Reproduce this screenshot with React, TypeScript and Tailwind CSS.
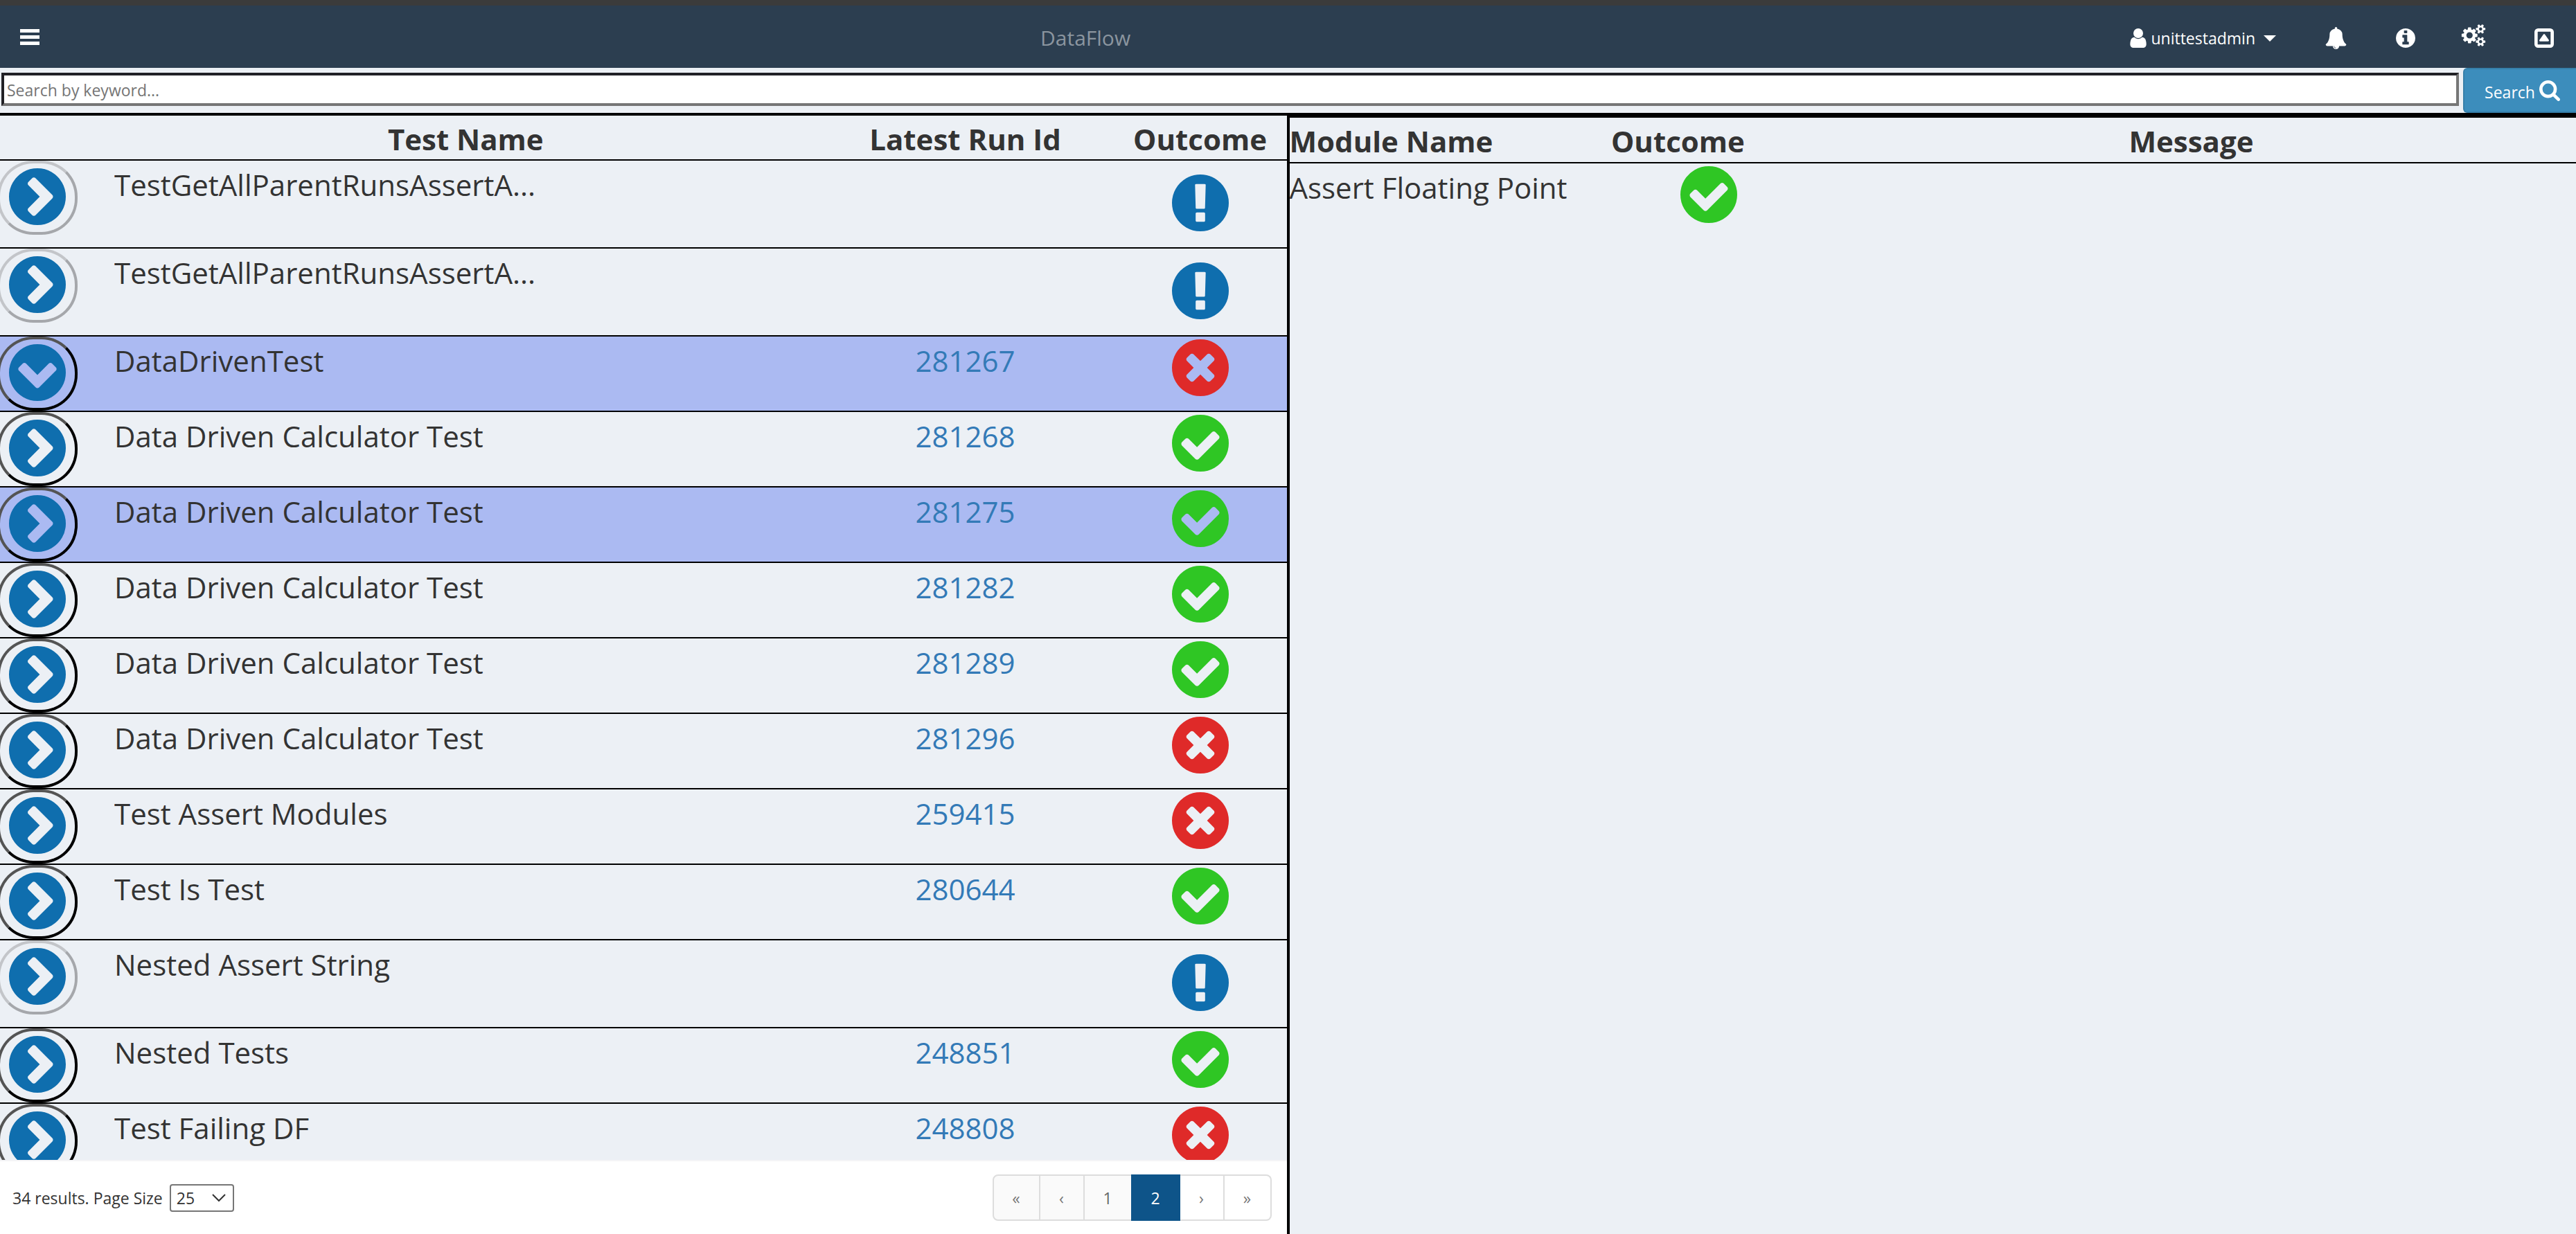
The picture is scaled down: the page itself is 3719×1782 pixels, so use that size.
import React from "react";

const CIRCLE =
  "M1664 896q0 209-103 385.5t-279.5 279.5-385.5 103-385.5-103-279.5-279.5-103-385.5 103-385.5 279.5-279.5 385.5-103 385.5 103 279.5 279.5 103 385.5z";

const PATHS = {
  right:
    "M845 1395l454-454q19-19 19-45t-19-45l-454-454q-19-19-45-19t-45 19l-102 102q-19 19-19 45t19 45l307 307-307 307q-19 19-19 45t19 45l102 102q19 19 45 19t45-19z" +
    CIRCLE,
  down:
    "M941 1299l454-454q19-19 19-45t-19-45l-102-102q-19-19-45-19t-45 19l-307 307-307-307q-19-19-45-19t-45 19l-102 102q-19 19-19 45t19 45l454 454q19 19 45 19t45-19z" +
    CIRCLE,
  pass:
    "M1412 734q0-28-18-46l-91-90q-19-19-45-19t-45 19l-408 407-226-226q-19-19-45-19t-45 19l-91 90q-18 18-18 46 0 27 18 45l362 362q19 19 45 19 27 0 46-19l543-543q18-18 18-45z" +
    CIRCLE,
  fail:
    "M1277 1122q0-26-19-45l-181-181 181-181q19-19 19-45 0-27-19-46l-90-90q-19-19-46-19-26 0-45 19l-181 181-181-181q-19-19-45-19-27 0-46 19l-90 90q-19 19-19 46 0 26 19 45l181 181-181 181q-19 19-19 45 0 27 19 46l90 90q19 19 46 19 26 0 45-19l181-181 181 181q19 19 45 19 27 0 46-19l90-90q19-19 19-46z" +
    CIRCLE,
  none:
    "M1024 1375v-190q0-14-9-23.5t-22-9.5h-192q-13 0-23 10t-10 23v190q0 13 10 23t23 10h192q13 0 22-9.5t9-23.5zm-2-344l18-621q0-12-10-18-10-8-24-8h-220q-14 0-24 8-10 6-10 18l17 621q0 10 10 17.5t24 7.5h185q14 0 23.5-7.5t10.5-17.5z" +
    CIRCLE,
  info:
    "M1152 1376v-160q0-14-9-23t-23-9h-96v-512q0-14-9-23t-23-9h-320q-14 0-23 9t-9 23v160q0 14 9 23t23 9h96v320h-96q-14 0-23 9t-9 23v160q0 14 9 23t23 9h448q14 0 23-9t9-23zm-128-896v-160q0-14-9-23t-23-9h-192q-14 0-23 9t-9 23v160q0 14 9 23t23 9h192q14 0 23-9t9-23z" +
    CIRCLE,
  user:
    "M1536 1399q0 109-62.5 187t-150.5 78h-854q-88 0-150.5-78t-62.5-187q0-85 8.5-160.5t31.5-152 58.5-131 94-89 134.5-34.5q131 128 313 128t313-128q76 0 134.5 34.5t94 89 58.5 131 31.5 152 8.5 160.5zm-256-887q0 159-112.5 271.5t-271.5 112.5-271.5-112.5-112.5-271.5 112.5-271.5 271.5-112.5 271.5 112.5 112.5 271.5z",
  bell:
    "M912 1696q0-16-16-16-59 0-101.5-42.5t-42.5-101.5q0-16-16-16t-16 16q0 73 51.5 124.5t124.5 51.5q16 0 16-16zm816-288q0 52-38 90t-90 38h-448q0 106-75 181t-181 75-181-75-75-181h-448q-52 0-90-38t-38-90q50-42 91-88t85-119.5 74.5-158.5 50-206 19.5-260q0-152 117-282.5t307-158.5q-8-19-8-39 0-40 28-68t68-28 68 28 28 68q0 20-8 39 190 28 307 158.5t117 282.5q0 139 19.5 260t50 206 74.5 158.5 85 119.5 91 88z",
  search:
    "M1216 832q0-185-131.5-316.5t-316.5-131.5-316.5 131.5-131.5 316.5 131.5 316.5 316.5 131.5 316.5-131.5 131.5-316.5zm512 832q0 52-38 90t-90 38q-54 0-90-38l-343-342q-179 124-399 124-143 0-273.5-55.5t-225-150-150-225-55.5-273.5 55.5-273.5 150-225 225-150 273.5-55.5 273.5 55.5 225 150 150 225 55.5 273.5q0 220-124 399l343 343q37 37 37 90z",
  cogs:
    "M896 896q0-106-75-181t-181-75-181 75-75 181 75 181 181 75 181-75 75-181zm768 512q0-52-38-90t-90-38-90 38-38 90q0 53 37.5 90.5t90.5 37.5 90.5-37.5 37.5-90.5zm0-1024q0-52-38-90t-90-38-90 38-38 90q0 53 37.5 90.5t90.5 37.5 90.5-37.5 37.5-90.5zm-384 421v185q0 10-7 19.5t-16 10.5l-155 24q-11 35-32 76 34 48 90 115 7 11 7 20 0 12-7 19-23 30-82.5 89.5t-78.5 59.5q-11 0-21-7l-115-90q-37 19-77 31-11 108-23 155-7 24-30 24h-186q-11 0-20-7.5t-10-17.5l-23-153q-34-10-75-31l-118 89q-7 7-20 7-11 0-21-8-144-133-144-160 0-9 7-19 10-14 41-53t47-61q-23-44-35-82l-152-24q-10-1-17-9.5t-7-19.5v-185q0-10 7-19.5t16-10.5l155-24q11-35 32-76-34-48-90-115-7-11-7-20 0-12 7-20 22-30 82-89t79-59q11 0 21 7l115 90q34-18 77-32 11-108 23-154 7-24 30-24h186q11 0 20 7.5t10 17.5l23 153q34 10 75 31l118-89q8-7 20-7 11 0 21 8 144 133 144 160 0 8-7 19-12 16-42 54t-45 60q23 48 34 82l152 23q10 2 17 10.5t7 19.5zm640 533v140q0 16-149 31-12 27-30 52 51 113 51 138 0 4-4 7-122 71-124 71-8 0-46-47t-52-68q-20 2-30 2t-30-2q-14 21-52 68t-46 47q-2 0-124-71-4-3-4-7 0-25 51-138-18-25-30-52-149-15-149-31v-140q0-16 149-31 13-29 30-52-51-113-51-138 0-4 4-7 4-2 35-20t59-34 30-16q8 0 46 46.5t52 67.5q20-2 30-2t30 2q51-71 92-112l6-2q4 0 124 70 4 3 4 7 0 25-51 138 17 23 30 52 149 15 149 31zm0-1024v140q0 16-149 31-12 27-30 52 51 113 51 138 0 4-4 7-122 71-124 71-8 0-46-47t-52-68q-20 2-30 2t-30-2q-14 21-52 68t-46 47q-2 0-124-71-4-3-4-7 0-25 51-138-18-25-30-52-149-15-149-31v-140q0-16 149-31 13-29 30-52-51-113-51-138 0-4 4-7 4-2 35-20t59-34 30-16q8 0 46 46.5t52 67.5q20-2 30-2t30 2q51-71 92-112l6-2q4 0 124 70 4 3 4 7 0 25-51 138 17 23 30 52 149 15 149 31z",
  caretUp:
    "M416 128h960q119 0 203.500 84.500T1664 416v960q0 119-84.500 203.500T1376 1664H416q-119 0-203.500-84.500T128 1376V416q0-119 84.500-203.500T416 128zm0 256q-32 0-32 32v960q0 32 32 32h960q32 0 32-32V416q0-32-32-32zm853 731q-18 37-57 37H576q-39 0-57-37t5-69l320-448q19-27 52-27t52 27l320 448q23 32 1 69z",
};

type IconName = keyof typeof PATHS;

function Icon({ name, className, viewBox = "128 128 1536 1536" }: { name: IconName; className: string; viewBox?: string }) {
  return (
    <svg viewBox={viewBox} className={className} fill="currentColor" fillRule="evenodd" aria-hidden="true">
      <path d={PATHS[name]} />
    </svg>
  );
}

type Outcome = "pass" | "fail" | "none";

const OUTCOME_COLOR: Record<Outcome, string> = {
  pass: "text-[#2fc624]",
  fail: "text-[#df2a29]",
  none: "text-[#0f6eae]",
};
const OUTCOME_LABEL: Record<Outcome, string> = { pass: "Passed", fail: "Failed", none: "Not run" };

function OutcomeIcon({ outcome }: { outcome: Outcome }) {
  return (
    <span role="img" aria-label={OUTCOME_LABEL[outcome]} className={"inline-block align-top " + OUTCOME_COLOR[outcome]}>
      <Icon name={outcome} className="size-[82px]" />
    </span>
  );
}

type Row = { name: string; run?: string; outcome: Outcome; selected?: boolean; open?: boolean };

const ROWS: Row[] = [
  { name: "TestGetAllParentRunsAssertA...", outcome: "none" },
  { name: "TestGetAllParentRunsAssertA...", outcome: "none" },
  { name: "DataDrivenTest", run: "281267", outcome: "fail", selected: true, open: true },
  { name: "Data Driven Calculator Test", run: "281268", outcome: "pass" },
  { name: "Data Driven Calculator Test", run: "281275", outcome: "pass", selected: true },
  { name: "Data Driven Calculator Test", run: "281282", outcome: "pass" },
  { name: "Data Driven Calculator Test", run: "281289", outcome: "pass" },
  { name: "Data Driven Calculator Test", run: "281296", outcome: "fail" },
  { name: "Test Assert Modules", run: "259415", outcome: "fail" },
  { name: "Test Is Test", run: "280644", outcome: "pass" },
  { name: "Nested Assert String", outcome: "none" },
  { name: "Nested Tests", run: "248851", outcome: "pass" },
  { name: "Test Failing DF", run: "248808", outcome: "fail" },
];

function TestRow({ row }: { row: Row }) {
  const enabled = Boolean(row.run);
  return (
    <tr
      className={
        "border-b-2 border-black align-top " + (enabled ? "h-[109px] " : "h-[127px] ") + (row.selected ? "bg-[#abbaf2]" : "")
      }
    >
      <td className="p-0">
        <button
          type="button"
          disabled={!enabled}
          aria-label={"Expand " + row.name}
          aria-expanded={Boolean(row.open)}
          className={
            "-ml-1 flex h-[107px] w-[116px] items-center justify-center rounded-[52px] border-4 pb-1 [border-style:outset] " +
            (enabled ? "border-black" : "border-[rgba(16,16,16,0.3)]")
          }
        >
          <Icon name={row.open ? "down" : "right"} className="size-[82px] text-[#0f6eae]" />
        </button>
      </td>
      <td className="truncate p-0 pt-1.5">{row.name}</td>
      <td className="p-0 pt-1.5 text-center">
        {row.run && (
          <a href={"#run-" + row.run} className="text-[#337ab7]">
            {row.run}
          </a>
        )}
      </td>
      <td className={"p-0 text-center " + (enabled ? "pt-1" : "pt-5")}>
        <OutcomeIcon outcome={row.outcome} />
      </td>
    </tr>
  );
}

const PAGES = [
  { text: "«", label: "First page", style: "w-[69px] rounded-l-lg border-2 border-[#ddd] bg-[#fafafa] text-[#777]" },
  { text: "‹", label: "Previous page", style: "w-[64px] border-y-2 border-r-2 border-[#ddd] bg-[#fafafa] text-[#777]" },
  { text: "1", label: "Page 1", style: "w-[67px] border-y-2 border-[#ddd] bg-[#fafafa] text-[#666]" },
  { text: "2", label: "Page 2", style: "w-[71px] bg-[#0e5489] text-white" },
  { text: "›", label: "Next page", style: "w-[64px] border-y-2 border-r-2 border-[#ddd] bg-white text-[#777]" },
  { text: "»", label: "Last page", style: "w-[68px] rounded-r-lg border-y-2 border-r-2 border-[#ddd] bg-white text-[#777]" },
];

function TopBar() {
  return (
    <header className="flex h-[98px] shrink-0 items-center border-t-8 border-[#3b3b3b] bg-[#2c3e50] text-white">
      <button type="button" aria-label="Toggle menu" className="ml-[29px] flex w-7 flex-col gap-1">
        <span className="h-[5px] bg-white" />
        <span className="h-[5px] bg-white" />
        <span className="h-[5px] bg-white" />
      </button>
      <h1 className="ml-[1445px] pt-1 text-[30px] leading-10 text-[#8b959f]">DataFlow</h1>
      <nav className="ml-auto flex items-center pt-1 text-white">
        <button type="button" className="flex items-center text-[23px] leading-8">
          <Icon name="user" className="mr-1.5 h-7 w-6" viewBox="256 128 1280 1536" />
          unittestadmin
          <svg viewBox="0 0 18 9" className="ml-3 h-[9px] w-[18px]" fill="currentColor" aria-hidden="true">
            <path d="M0 0h18l-9 9z" />
          </svg>
        </button>
        <button type="button" aria-label="Notifications" className="ml-[71px]">
          <Icon name="bell" className="h-8 w-[31px]" viewBox="64 0 1664 1792" />
        </button>
        <button type="button" aria-label="Information" className="ml-[71px]">
          <Icon name="info" className="size-7" />
        </button>
        <button type="button" aria-label="Settings" className="ml-[66px] pb-2">
          <Icon name="cogs" className="h-8 w-9" viewBox="0 0 1920 1792" />
        </button>
        <button type="button" aria-label="Collapse header" className="mr-8 ml-[70px]">
          <Icon name="caretUp" className="size-7" />
        </button>
      </nav>
    </header>
  );
}

function SearchBar() {
  return (
    <form className="flex h-[65px] shrink-0 items-start" onSubmit={(e) => e.preventDefault()}>
      <input
        id="keyword"
        type="text"
        aria-label="Search by keyword"
        placeholder="Search by keyword..."
        className="mt-[7px] mr-1.5 ml-0.5 h-12 min-w-0 flex-1 border-4 border-[#212126] border-r-[#767676] border-b-[#767676] bg-white px-1 pt-0.5 text-[23px] leading-8 placeholder:text-[#757575]"
      />
      <button
        type="submit"
        className="flex h-full w-[163px] items-center justify-center gap-1.5 rounded-l-md border-2 border-r-0 border-[#367fa9] bg-[#3c8dbc] pl-1.5 text-[23px] leading-8 text-white"
      >
        <span className="pt-1">Search</span>
        <Icon name="search" className="size-[30px]" viewBox="64 128 1664 1664" />
      </button>
    </form>
  );
}

export default function App() {
  return (
    <div className="flex h-screen flex-col overflow-hidden bg-[#ecf0f5] text-[#333] [font-family:'Open_Sans','Noto_Sans',sans-serif]">
      <TopBar />
      <SearchBar />
      <main className="flex min-h-0 flex-1 border-t-4 border-black">
        <section className="flex w-1/2 flex-col border-r-2 border-black">
          <div className="min-h-0 flex-1 overflow-hidden">
            <table className="w-full table-fixed border-collapse text-[42px] leading-[58px]">
              <colgroup>
                <col className="w-[165px]" />
                <col />
                <col className="w-[428px]" />
                <col className="w-[250px]" />
              </colgroup>
              <thead>
                <tr className="h-16 border-b-2 border-black">
                  <td className="p-0" />
                  <th className="p-0 pt-1">Test Name</th>
                  <th className="p-0 pt-1">Latest Run Id</th>
                  <th className="p-0 pt-1">Outcome</th>
                </tr>
              </thead>
              <tbody>
                {ROWS.map((row, i) => (
                  <TestRow key={i} row={row} />
                ))}
              </tbody>
            </table>
          </div>
          <footer className="flex h-[107px] shrink-0 items-center justify-between border-t-2 border-[#f4f4f6] bg-white pr-[22px] pl-[18px] text-[23px] leading-8">
            <div className="flex items-center gap-2.5">
              <label htmlFor="page-size">34 results. Page Size</label>
              <span className="relative flex items-center">
                <select
                  id="page-size"
                  defaultValue="25"
                  className="h-10 w-[93px] appearance-none rounded-sm border-2 border-[#767676] bg-white pl-2 leading-8"
                >
                  <option>10</option>
                  <option>25</option>
                  <option>50</option>
                </select>
                <svg
                  viewBox="0 0 20 12"
                  className="pointer-events-none absolute right-3 h-3 w-5"
                  fill="none"
                  stroke="#333"
                  strokeWidth="2"
                  aria-hidden="true"
                >
                  <path d="M1 1l9 9 9-9" />
                </svg>
              </span>
            </div>
            <nav aria-label="Pagination" className="flex">
              {PAGES.map((p) => (
                <button key={p.label} type="button" aria-label={p.label} className={"h-[67px] " + p.style}>
                  {p.text}
                </button>
              ))}
            </nav>
          </footer>
        </section>
        <section className="w-1/2 border-t-3 border-l-2 border-black">
          <table className="w-full table-fixed border-collapse text-[42px] leading-[58px]">
            <colgroup>
              <col className="w-1/4" />
              <col className="w-[282px]" />
              <col />
            </colgroup>
            <thead>
              <tr className="h-[65px] border-b-2 border-black text-left">
                <th className="p-0 pt-1">Module Name</th>
                <th className="p-0 pt-1">Outcome</th>
                <th className="p-0 pt-1 text-center">Message</th>
              </tr>
            </thead>
            <tbody>
              <tr className="align-top">
                <td className="p-0 pt-1.5 whitespace-nowrap">Assert Floating Point</td>
                <td className="p-0 pt-1 text-center">
                  <OutcomeIcon outcome="pass" />
                </td>
                <td className="p-0" />
              </tr>
            </tbody>
          </table>
        </section>
      </main>
    </div>
  );
}
